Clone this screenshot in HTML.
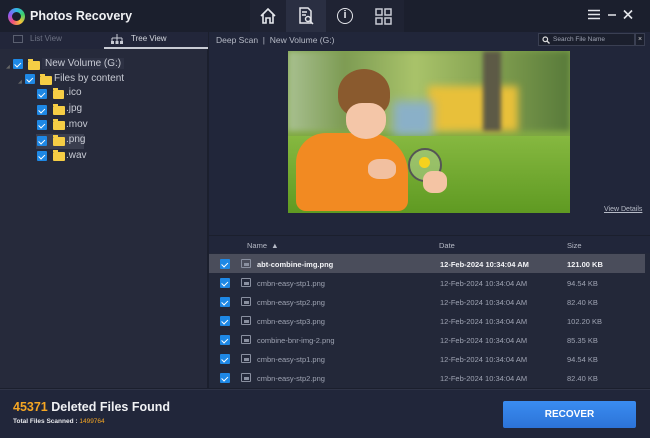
<!DOCTYPE html>
<html><head><style>
*{margin:0;padding:0;box-sizing:border-box}
body{width:650px;height:438px;overflow:hidden;background:#1b1f2d;font-family:"Liberation Sans",sans-serif;position:relative;color:#c9ccd6}
.abs{position:absolute}
.title{left:0;top:0;width:650px;height:32px;background:#1b1f2d}
.cb{position:absolute;width:10px;height:10px;background:#1e88e5;border-radius:1px}
.cb:after{content:"";position:absolute;left:3px;top:1.5px;width:2.5px;height:4.5px;border:solid #fff;border-width:0 1.3px 1.3px 0;transform:rotate(45deg)}
.fold{position:absolute;width:12px;height:9px;background:#f5cd45;border-radius:1px}
.fold:before{content:"";position:absolute;left:0;top:-2px;width:5px;height:2px;background:#f5cd45}
.tr{position:absolute;font-size:10px;color:#c8cbd4}
.row{position:absolute;left:209px;width:436px;height:19px;font-size:7.5px;color:#9ea3b2}
.row span{position:absolute;top:6px}
.ic{position:absolute;left:32px;top:5px;width:10px;height:9px;border:1px solid #8a90a0;border-radius:1px}
.ic:after{content:"";position:absolute;left:2px;bottom:1px;width:5px;height:3px;background:#8a90a0}
</style></head><body>
<div class="abs title"></div>
<div class="abs" style="left:8px;top:8px;width:17px;height:17px;border-radius:50%;background:conic-gradient(#2fb7e8,#3bd06b,#f5c338,#ef4e7b,#8b5cf6,#2fb7e8)"></div>
<div class="abs" style="left:12px;top:12px;width:9px;height:9px;border-radius:50%;background:#1b1f2d"></div>
<div class="abs" style="left:30px;top:9px;font-size:12.5px;font-weight:bold;color:#f0f1f4">Photos Recovery</div>
<div class="abs" style="left:250px;top:0;width:36px;height:32px;background:#1f2333"></div>
<div class="abs" style="left:286px;top:0;width:40px;height:32px;background:#2a2f42"></div>
<svg class="abs" style="left:258px;top:7px" width="20" height="18" viewBox="0 0 20 18"><path d="M3 9 L10 2 L17 9 M5 7 V16 H8 V11 H12 V16 H15 V7" fill="none" stroke="#e4e6eb" stroke-width="1.6"/></svg>
<svg class="abs" style="left:297px;top:7px" width="18" height="18" viewBox="0 0 18 18"><path d="M3 1 H11 L14 4 V16 H3 Z M5 5 H10 M5 8 H9" fill="none" stroke="#e4e6eb" stroke-width="1.5"/><circle cx="11" cy="12" r="2.5" fill="#2a2f42" stroke="#e4e6eb" stroke-width="1.4"/><path d="M13 14 L16 17" stroke="#e4e6eb" stroke-width="1.5"/></svg>
<div class="abs" style="left:326px;top:0;width:38px;height:32px;background:#1f2333"></div>
<div class="abs" style="left:337px;top:8px;width:16px;height:16px;border:1.5px solid #e4e6eb;border-radius:50%;font-size:11px;font-weight:bold;color:#e4e6eb;text-align:center;line-height:13px">i</div>
<div class="abs" style="left:364px;top:0;width:40px;height:32px;background:#1f2333"></div>
<svg class="abs" style="left:375px;top:8px" width="17" height="17"><g fill="none" stroke="#c8cbd4" stroke-width="1.5"><rect x="1" y="1" width="6" height="6"/><rect x="10" y="1" width="6" height="6"/><rect x="1" y="10" width="6" height="6"/><rect x="10" y="10" width="6" height="6"/></g></svg>
<svg class="abs" style="left:587px;top:9px" width="50" height="12"><path d="M1 1.5H13M1 5.5H13M1 9.5H13" stroke="#e4e6eb" stroke-width="1.6"/><path d="M21 6H29" stroke="#e4e6eb" stroke-width="1.5"/><path d="M37 1.5L45 9.5M45 1.5L37 9.5" stroke="#e4e6eb" stroke-width="1.6"/></svg>
<div class="abs" style="left:0;top:32px;width:208px;height:356px;background:#262a3b;border-right:1px solid #1b1f2d"></div>
<div class="abs" style="left:0;top:32px;width:208px;height:17px;background:#22263a"></div>
<div class="abs" style="left:104px;top:47px;width:104px;height:2px;background:#c8cbd4"></div>
<div class="abs" style="left:13px;top:35px;width:10px;height:8px;border:1px solid #5a5f70"></div>
<div class="abs" style="left:30px;top:34px;font-size:8px;color:#6e7384">List View</div>
<svg class="abs" style="left:111px;top:34px" width="12" height="10"><path d="M6 0V4M1 4H11M1 4V7M6 4V7M11 4V7" stroke="#c8cbd4" stroke-width="1"/><rect x="0" y="7" width="3" height="3" fill="#c8cbd4"/><rect x="4.5" y="7" width="3" height="3" fill="#c8cbd4"/><rect x="9" y="7" width="3" height="3" fill="#c8cbd4"/></svg>
<div class="abs" style="left:131px;top:34px;font-size:8px;color:#d4d7de">Tree View</div>
<div class="abs" style="left:6px;top:64px;font-size:5px;color:#666">◢</div>
<div class="cb" style="left:13px;top:59px"></div><div class="fold" style="left:28px;top:61px"></div>
<div class="tr" style="left:42px;top:58px;background:#2d3143;padding:0 3px">New Volume (G:)</div>
<div class="abs" style="left:18px;top:79px;font-size:5px;color:#666">◢</div>
<div class="cb" style="left:25px;top:74px"></div><div class="fold" style="left:40px;top:76px"></div>
<div class="tr" style="left:54px;top:73px">Files by content</div>
<div class="cb" style="left:37px;top:89px"></div><div class="fold" style="left:53px;top:90px;width:11px;height:9px"></div><div class="tr" style="left:66px;top:87px">.ico</div>
<div class="cb" style="left:37px;top:105px"></div><div class="fold" style="left:53px;top:106px"></div><div class="tr" style="left:66px;top:103px">.jpg</div>
<div class="cb" style="left:37px;top:120px"></div><div class="fold" style="left:53px;top:121px"></div><div class="tr" style="left:66px;top:119px">.mov</div>
<div class="abs" style="left:36px;top:134px;width:48px;height:15px;background:#3a3e4f"></div>
<div class="cb" style="left:37px;top:136px"></div><div class="fold" style="left:53px;top:137px"></div><div class="tr" style="left:66px;top:134px">.png</div>
<div class="cb" style="left:37px;top:151px"></div><div class="fold" style="left:53px;top:152px"></div><div class="tr" style="left:66px;top:150px">.wav</div>
<div class="abs" style="left:209px;top:32px;width:441px;height:203px;background:#21263a"></div>
<div class="abs" style="left:216px;top:35px;font-size:8.5px;color:#b6bac6">Deep Scan &nbsp;|&nbsp; New Volume (G:)</div>
<div class="abs" style="left:538px;top:33px;width:97px;height:13px;background:#1b1f2d;border:1px solid #3a3f52"></div>
<div class="abs" style="left:635px;top:33px;width:10px;height:13px;background:#1b1f2d;border:1px solid #3a3f52;font-size:7px;color:#ccc;text-align:center;line-height:11px">×</div>
<svg class="abs" style="left:542px;top:36px" width="8" height="8"><circle cx="3.3" cy="3.3" r="2.3" fill="none" stroke="#ddd" stroke-width="1.2"/><path d="M5 5L7.5 7.5" stroke="#ddd" stroke-width="1.3"/></svg>
<div class="abs" style="left:553px;top:36px;font-size:6.5px;color:#9ea3b2">Search File Name</div>
<div class="abs" style="left:288px;top:51px;width:282px;height:162px;overflow:hidden;background:linear-gradient(180deg,#7fa24a 0%,#8bb04f 40%,#78a53a 60%,#5b8f24 100%)">
 <div class="abs" style="left:0;top:0;width:282px;height:80px;background:linear-gradient(90deg,#a8c090 0%,#7d9b53 20%,#a9c36a 45%,#86a352 70%,#587a3a 100%);filter:blur(3px)"></div>
 <div class="abs" style="left:140px;top:35px;width:90px;height:45px;background:#e8c03a;filter:blur(4px)"></div>
 <div class="abs" style="left:105px;top:50px;width:40px;height:35px;background:#8ab0c8;filter:blur(5px)"></div>
 <div class="abs" style="left:195px;top:0;width:18px;height:80px;background:#5d5a46;filter:blur(2px)"></div>
 <div class="abs" style="left:0;top:85px;width:282px;height:77px;background:linear-gradient(180deg,#86b840,#5f9a22);"></div>
 <div class="abs" style="left:8px;top:82px;width:112px;height:78px;background:#f28a22;border-radius:30px 40px 10px 10px"></div>
 <div class="abs" style="left:50px;top:18px;width:52px;height:48px;background:#8a5a2e;border-radius:50% 50% 40% 40%"></div>
 <div class="abs" style="left:58px;top:52px;width:40px;height:36px;background:#f4c6a8;border-radius:40% 40% 50% 50%"></div>
 <div class="abs" style="left:80px;top:108px;width:28px;height:20px;background:#f2c0a0;border-radius:40%"></div>
 <div class="abs" style="left:120px;top:97px;width:34px;height:34px;border:2px solid #555;border-radius:50%;background:rgba(200,220,180,.4)"></div>
 <div class="abs" style="left:131px;top:106px;width:11px;height:11px;background:#f6d21e;border-radius:50%"></div>
 <div class="abs" style="left:135px;top:120px;width:24px;height:22px;background:#f4c4a4;border-radius:40%"></div>
</div>
<div class="abs" style="left:604px;top:206px;font-size:7px;color:#b6bac6;text-decoration:underline">View Details</div>
<div class="abs" style="left:209px;top:236px;width:441px;height:152px;background:#232839"></div>
<div class="abs" style="left:209px;top:236px;width:441px;height:17px;background:#21263a"></div>
<div class="abs" style="left:247px;top:241px;font-size:7.5px;color:#b6bac6">Name &nbsp;▲</div>
<div class="abs" style="left:439px;top:241px;font-size:7.5px;color:#b6bac6">Date</div>
<div class="abs" style="left:567px;top:241px;font-size:7.5px;color:#b6bac6">Size</div>
<div class="row" style="top:254px;background:#4a4d5b;color:#f2f3f6;font-weight:bold"><div class="cb" style="left:11px;top:5px"></div><div class="ic"></div><span style="left:48px">abt-combine-img.png</span><span style="left:231px">12-Feb-2024 10:34:04 AM</span><span style="left:358px">121.00 KB</span></div>
<div class="row" style="top:273px"><div class="cb" style="left:11px;top:5px"></div><div class="ic"></div><span style="left:48px">cmbn-easy-stp1.png</span><span style="left:231px">12-Feb-2024 10:34:04 AM</span><span style="left:358px">94.54 KB</span></div>
<div class="row" style="top:292px"><div class="cb" style="left:11px;top:5px"></div><div class="ic"></div><span style="left:48px">cmbn-easy-stp2.png</span><span style="left:231px">12-Feb-2024 10:34:04 AM</span><span style="left:358px">82.40 KB</span></div>
<div class="row" style="top:311px"><div class="cb" style="left:11px;top:5px"></div><div class="ic"></div><span style="left:48px">cmbn-easy-stp3.png</span><span style="left:231px">12-Feb-2024 10:34:04 AM</span><span style="left:358px">102.20 KB</span></div>
<div class="row" style="top:330px"><div class="cb" style="left:11px;top:5px"></div><div class="ic"></div><span style="left:48px">combine-bnr-img-2.png</span><span style="left:231px">12-Feb-2024 10:34:04 AM</span><span style="left:358px">85.35 KB</span></div>
<div class="row" style="top:349px"><div class="cb" style="left:11px;top:5px"></div><div class="ic"></div><span style="left:48px">cmbn-easy-stp1.png</span><span style="left:231px">12-Feb-2024 10:34:04 AM</span><span style="left:358px">94.54 KB</span></div>
<div class="row" style="top:368px"><div class="cb" style="left:11px;top:5px"></div><div class="ic"></div><span style="left:48px">cmbn-easy-stp2.png</span><span style="left:231px">12-Feb-2024 10:34:04 AM</span><span style="left:358px">82.40 KB</span></div>
<div class="abs" style="left:0;top:389px;width:650px;height:49px;background:#21263a;border-top:1px solid #2f3447"></div>
<div class="abs" style="left:13px;top:400px;font-size:12.5px;font-weight:bold;color:#f0f1f4"><span style="color:#f5a623">45371</span> Deleted Files Found</div>
<div class="abs" style="left:13px;top:418px;font-size:6.5px;font-weight:bold;color:#e8e9ed">Total Files Scanned : <span style="color:#f5a623;font-weight:normal">1499764</span></div>
<div class="abs" style="left:503px;top:401px;width:133px;height:27px;background:linear-gradient(#3a8cf0,#2c73d8);border-radius:2px;color:#fff;font-size:10px;font-weight:bold;text-align:center;line-height:27px">RECOVER</div>
</body></html>
